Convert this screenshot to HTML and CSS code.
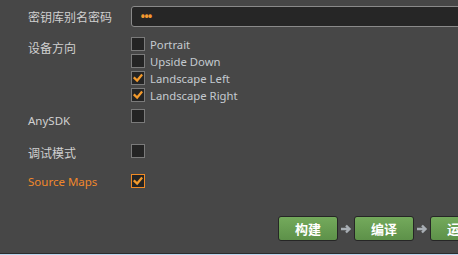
FILE: index.html
```html
<!DOCTYPE html>
<html lang="zh">
<head>
<meta charset="UTF-8" />
<title>构建发布</title>
<link rel="stylesheet" href="styles.css">
</head>
<body>
<div class="panel">
  <!-- 密钥库别名密码 -->
  <div class="row row-key">
    <div class="label">密钥库别名密码</div>
    <div class="field"><span class="dots">•••</span></div>
  </div>

  <!-- 设备方向 -->
  <div class="row row-orient">
    <div class="label">设备方向</div>
    <div class="options">
      <div class="option"><span class="box"></span><span class="opt-text">Portrait</span></div>
      <div class="option"><span class="box"></span><span class="opt-text">Upside Down</span></div>
      <div class="option"><span class="box checked"><svg viewBox="0 0 14 14"><path d="M3 7.2 L6 10 L11 4" /></svg></span><span class="opt-text">Landscape Left</span></div>
      <div class="option"><span class="box checked"><svg viewBox="0 0 14 14"><path d="M3 7.2 L6 10 L11 4" /></svg></span><span class="opt-text">Landscape Right</span></div>
    </div>
  </div>

  <div class="row row-sdk">
    <div class="label label-latin">AnySDK</div>
    <span class="box"></span>
  </div>

  <div class="row row-debug">
    <div class="label">调试模式</div>
    <span class="box"></span>
  </div>

  <div class="row row-maps">
    <div class="label label-latin label-orange">Source Maps</div>
    <span class="box box-orange checked"><svg viewBox="0 0 14 14"><path d="M3 7.2 L6 10 L11 4" /></svg></span>
  </div>

  <div class="actions">
    <button class="btn">构建</button>
    <svg class="arrow" viewBox="0 0 12 12"><path d="M1 6 H9 M6 2.5 L9.5 6 L6 9.5" /></svg>
    <button class="btn">编译</button>
    <svg class="arrow" viewBox="0 0 12 12"><path d="M1 6 H9 M6 2.5 L9.5 6 L6 9.5" /></svg>
    <button class="btn">运行</button>
  </div>
</div>
<div class="statusbar"></div>
</body>
</html>
```

FILE: styles.css
```css
html, body {
  margin: 0;
  height: 100%;
}
body {
  width: 458px;
  height: 255px;
  overflow: hidden;
  background: #474747;
  font-family: 'Noto Sans', 'Noto Sans CJK SC', sans-serif;
  color: #d2d2d2;
  display: flex;
  flex-direction: column;
}
.panel {
  flex: 1;
  padding-top: 6px;
  overflow: hidden;
}
.row {
  display: flex;
  align-items: flex-start;
}
.label {
  width: 103px;
  padding-left: 28px;
  flex-shrink: 0;
  font-size: 12px;
  line-height: 17px;
  color: #d0d0d0;
  font-family: 'Noto Sans CJK SC', 'Noto Sans', sans-serif;
}
.label-latin {
  font-family: 'Noto Sans', sans-serif;
  font-size: 11.5px;
}
.label-orange {
  color: #f0882c;
}
/* key password */
.row-key .label {
  line-height: 21px;
}
.field {
  flex: 1;
  height: 19px;
  margin-right: -10px;
  border: 1px solid #8a8a8a;
  border-radius: 3px;
  background: #262626;
  display: flex;
  align-items: center;
  padding-left: 8px;
}
.dots {
  color: #f39a30;
  font-size: 15px;
  letter-spacing: -2px;
  line-height: 1;
}
/* orientation */
.row-orient {
  margin-top: 10px;
}
.row-orient .label {
  padding-top: 2px;
}
.options {
  display: flex;
  flex-direction: column;
}
.option {
  display: flex;
  height: 17px;
  align-items: flex-start;
}
.opt-text {
  margin-left: 5px;
  font-size: 11.3px;
  line-height: 15px;
  color: #c4cad0;
}
.box {
  width: 12px;
  height: 12px;
  border: 1px solid #7a7a7a;
  background: #242424;
  flex-shrink: 0;
  display: flex;
}
.box svg {
  width: 12px;
  height: 12px;
}
.box svg path {
  fill: none;
  stroke: #f39a2c;
  stroke-width: 2.6;
  stroke-linecap: square;
}
.box-orange {
  border-color: #f08a24;
}
.row-sdk {
  margin-top: 4px;
}
.row-sdk .label {
  padding-top: 3px;
}
.row-debug {
  margin-top: 15px;
}
.row-maps {
  margin-top: 13px;
}
.row-maps .label {
  line-height: 15px;
}
/* buttons */
.actions {
  display: flex;
  align-items: center;
  margin-top: 27px;
  padding-left: 278px;
  width: 300px;
}
.btn {
  flex-shrink: 0;
  width: 60px;
  height: 25px;
  border: 1px solid #262626;
  border-radius: 3px;
  background: linear-gradient(#74aa5c, #5d9149);
  color: #fff;
  font-weight: bold;
  font-size: 13px;
  font-family: 'Noto Sans CJK SC', sans-serif;
  padding: 0;
}
.arrow {
  width: 12px;
  height: 12px;
  margin: 0 2px 0 2px;
  flex-shrink: 0;
}
.arrow path {
  fill: none;
  stroke: #a8aeb4;
  stroke-width: 2.4;
}
.statusbar {
  height: 1px;
  border-top: 1px solid #2c2c2c;
  background: #bcd6f0;
}
```
